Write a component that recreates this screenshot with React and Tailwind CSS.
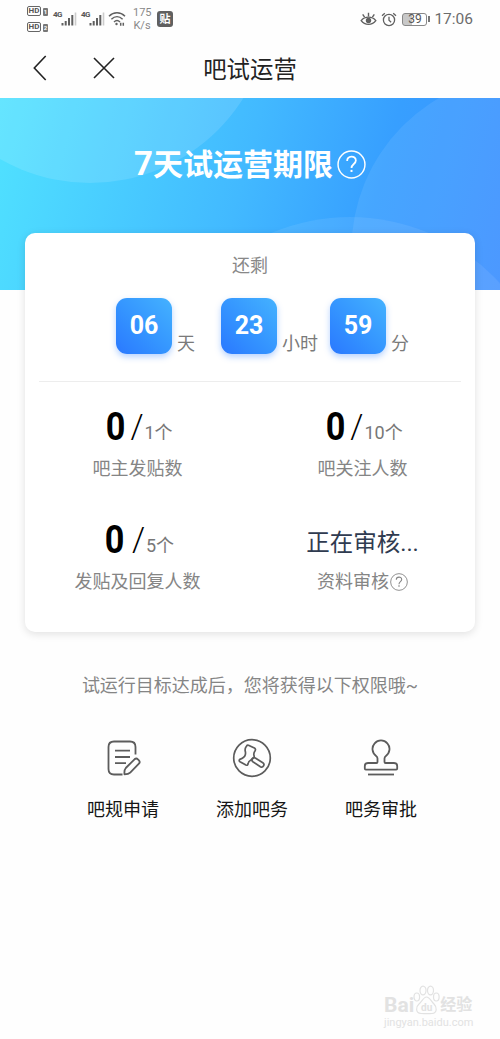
import React from 'react';

// Small "HD" badge with the SIM slot next to it
function HdBadge({ slot }) {
  return (
    <div className="flex items-end gap-[2px]">
      <span className="flex h-[10px] w-[14px] items-center justify-center rounded-[2px] border-[1.5px] border-[#666] text-[8px] leading-none font-bold text-[#555]">HD</span>
      <span className="flex h-[8px] w-[5px] items-center justify-center rounded-[1px] bg-[#777] text-[6px] leading-none font-bold text-white">{slot}</span>
    </div>
  );
}

function Signal() {
  return (
    <div className="flex h-[20px] w-[24px] items-start">
      <span className="-mr-[1px] w-[9px] shrink-0 text-[8px] leading-[11px] font-bold tracking-[-0.5px] text-[#555]">4G</span>
      <svg width="16" height="15" viewBox="0 0 16 15" className="mt-[3px] shrink-0">
        <path d="M1.5 11v2.5M4.7 9v4.5M8 6v7.5M11.3 3v10.5" stroke="#606060" strokeWidth="2" />
        <path d="M14.5 .5v13" stroke="#ccc" strokeWidth="1.6" />
      </svg>
    </div>
  );
}

function StatusBar() {
  return (
    <div className="flex h-[38px] items-center justify-between pr-[27px] pl-[27px] text-[#666]">
      <div className="flex items-center">
        <div className="flex w-[26px] flex-col gap-[6px]">
          <HdBadge slot="1" />
          <HdBadge slot="2" />
        </div>
        <div className="flex gap-[4px]">
          <Signal />
          <Signal />
        </div>
        <svg width="18" height="16" viewBox="0 0 18 16" fill="none" stroke="#606060" strokeWidth="1.5" className="ml-[3px]">
          <path d="M1 5.2C5.6.6 12.4.6 17 5.2M3.4 8.2c3.4-3.2 7.8-3.2 11.2 0M6 11c1.8-1.7 4.2-1.7 6 0" />
          <circle cx="8.5" cy="13" r="1.2" fill="#606060" stroke="none" />
          <path d="M12.7 11.8v3M15.3 11.8v3" />
        </svg>
        <div className="mt-[1px] ml-[7px] w-[18px] text-center text-[11px] leading-[12.5px] text-[#888]">
          <div>175</div>
          <div>K/s</div>
        </div>
        <div className="ml-[6px] flex h-[16px] w-[16px] items-center justify-center rounded-[3px] bg-[#606060] text-[11px] leading-none font-bold text-white">贴</div>
      </div>
      <div className="flex items-center">
        <svg width="17" height="14" viewBox="0 0 17 14" fill="none" stroke="#606060" strokeWidth="1.4">
          <path d="M1.2 8.6C4.8 4 12.2 4 15.8 8.6 12.2 13.6 4.8 13.6 1.2 8.6z" />
          <circle cx="8.5" cy="8.5" r="2.7" fill="#606060" stroke="none" />
          <path d="M8.5 4.6V.8M4.6 5.2 2.7 2.4M12.4 5.2l1.9-2.8" />
        </svg>
        <svg width="16" height="15" viewBox="0 0 16 15" fill="none" stroke="#606060" strokeWidth="1.3" className="ml-[4px]">
          <circle cx="8" cy="8" r="5.6" />
          <path d="M8 4.8v3.4l2.1 2M1 3.8 3.8 1.3M15 3.8l-2.8-2.5" />
        </svg>
        <div className="ml-[5px] flex h-[13px] w-[25px] items-center justify-center rounded-[3px] border border-[#888] bg-linear-to-r from-[#c8c8c8] from-39% to-white to-39% text-[12px] leading-none text-[#555]">39</div>
        <div className="ml-[1px] h-[6px] w-[2px] bg-[#777]" />
        <span className="mt-[2px] ml-[4px] text-[15.5px] leading-none text-[#6c6c6c]">17:06</span>
      </div>
    </div>
  );
}

function Header() {
  return (
    <div className="grid h-[60px] grid-cols-[125px_1fr_125px] items-center">
      <div className="flex items-center pl-[33px]">
        <svg width="14" height="26" viewBox="0 0 14 26" fill="none" stroke="#222" strokeWidth="1.6">
          <path d="M12.7 1 1.3 13l11.4 12" />
        </svg>
        <svg width="22" height="22" viewBox="0 0 22 22" fill="none" stroke="#222" strokeWidth="1.6" className="ml-[46px]">
          <path d="M1 1l20 20M21 1 1 21" />
        </svg>
      </div>
      <h1 className="pt-[4px] text-center text-[23.4px] leading-[30px] text-[#222]">吧试运营</h1>
    </div>
  );
}

function Help({ className }) {
  return (
    <svg viewBox="0 0 28 28" fill="none" stroke="currentColor" strokeWidth="1.4" className={className}>
      <circle cx="14" cy="14" r="13" />
      <path d="M9.8 10.6c0-5.6 8.4-5.6 8.4-.4 0 3.3-4.2 3.4-4.2 7.2" strokeWidth="1.7" />
      <path d="M14 19.2v2" strokeWidth="1.9" />
    </svg>
  );
}

function Banner() {
  return (
    <div className="relative h-[192px] bg-[linear-gradient(105deg,#50e2ff_0%,#42b9ff_48%,#379fff_73%,#3d90ff_100%)]">
      <svg className="absolute inset-0" width="500" height="192" viewBox="0 0 500 192" fill="#fff">
        <circle cx="90" cy="-96" r="181" fillOpacity=".12" />
        <circle cx="527" cy="152" r="175.6" fillOpacity=".08" />
        <circle cx="350" cy="322" r="203" fillOpacity=".08" />
      </svg>
      <div className="relative flex items-center justify-center pt-[44px] text-white">
        <span className="pt-[1px] text-[30px] leading-[42px] font-bold">
          <span className="text-[33px]">7</span>天试运营期限
        </span>
        <Help className="ml-[4px] h-[29px] w-[29px]" />
      </div>
    </div>
  );
}

function TimeBox({ value, unit, className }) {
  return (
    <div className={`flex items-end ${className}`}>
      <div className="flex h-[56px] w-[56px] items-center justify-center rounded-[11px] bg-linear-to-tr from-[#2b78ff] to-[#45b2ff] text-[25px] font-bold text-white shadow-[0_3px_6px_rgba(50,130,255,0.35)]">
        {value}
      </div>
      <span className="-mb-[2px] ml-[5px] text-[18px] leading-[24px] text-[#7a7a7a]">{unit}</span>
    </div>
  );
}

function Goal({ total, label, gap }) {
  return (
    <div className="flex flex-col items-center">
      <div className="flex h-[44px] items-baseline pl-[4px] text-[#777]">
        <span className="flex w-[19px] scale-x-90 justify-center text-[38px] leading-[44px] font-bold text-black">0</span>
        <span className={`-translate-y-[2px] text-[33px] leading-none font-light text-black ${gap}`}>/</span>
        <span className="ml-[1px] -translate-y-px text-[18px]">{total}</span>
      </div>
      <div className="mt-[7px] text-[18px] leading-[26px] text-[#858585]">{label}</div>
    </div>
  );
}

function Card() {
  return (
    <div className="relative mx-[25px] -mt-[57px] h-[399px] rounded-[10px] bg-white px-[14px] shadow-[0_2px_8px_rgba(0,0,0,0.12)]">
      <div className="pt-[21px] text-center text-[18px] leading-[24px] text-[#888]">还剩</div>
      <div className="mt-[20px] flex pl-[77px]">
        <TimeBox value="06" unit="天" className="w-[105px]" />
        <TimeBox value="23" unit="小时" className="w-[109px]" />
        <TimeBox value="59" unit="分" className="" />
      </div>
      <div className="mt-[27px] h-px bg-[#ededed]" />
      <div className="-ml-[14px] grid w-[450px] grid-cols-2 gap-y-[36px] pt-[23px]">
        <Goal total="1个" label="吧主发贴数" gap="ml-[5px]" />
        <Goal total="10个" label="吧关注人数" gap="ml-[5px]" />
        <Goal total="5个" label="发贴及回复人数" gap="ml-[8px]" />
        <div className="flex flex-col items-center">
          <div className="h-[44px] text-[23.5px] leading-[50px] text-[#2f3b50]">正在审核...</div>
          <div className="mt-[7px] flex items-center text-[18px] leading-[26px] text-[#858585]">
            资料审核
            <Help className="ml-[1px] h-[18px] w-[18px]" />
          </div>
        </div>
      </div>
    </div>
  );
}

function RuleIcon() {
  return (
    <svg width="40" height="40" viewBox="0 0 40 40" fill="none" stroke="#5c5c5c" strokeWidth="1.8" strokeLinejoin="round">
      <path d="M19.5 36.5H11q-5.5 0-5.5-5.5V9q0-5.5 5.5-5.5H27q5.5 0 5.5 5.500v7.5" />
      <path d="M12 12.7h15M12 19h15M12 25.2h11" />
      <path d="M22.8 30 31.5 21.3q1.8-1.5 3.4 0l1 1q1.6 1.7 0 3.4L27.2 34.6q-1.7 1.7-5.7 1.7-.5-4.3 1.3-6.3z" />
    </svg>
  );
}

function GavelIcon() {
  return (
    <svg width="40" height="40" viewBox="0 0 40 40" fill="none" stroke="#5c5c5c" strokeWidth="1.7" strokeLinejoin="round">
      <circle cx="20" cy="20" r="18.3" />
      <path d="M14.4 8.3q1-1.6 2.6-.8l5.4 2.6q1.7 1 .7 2.6-1.9 2.6-1 5 .4 1.5-.8 2.5l-2.4 1.7q-2.6 1.3-2.9 4.1-.4 1.8-2.1 1L8 23.700q-1.5-1-.2-2.3 4.7-1.6 5.5-4.7.5-2-.1-3.6-.5-2.5 1.2-4.8z" />
      <path d="M20.3 20.5q1.2-1.5 3-.5l7.5 4.7q1.9 1.3.8 3.100-1.2 2-3.2.9l-7.6-5q-1.7-1.5-.5-3.2z" />
    </svg>
  );
}

function StampIcon() {
  return (
    <svg width="40" height="40" viewBox="0 0 40 40" fill="none" stroke="#5c5c5c" strokeWidth="1.8" strokeLinejoin="round">
      <path d="M16.5 24v-3.5q0-1.6-1.4-2.6a8.5 8.5 0 1 1 9.800 0q-1.4 1-1.4 2.6V24q0 1 1 1H33q3.2 0 3.2 3v2.6q0 1-1 1H4.8q-1 0-1-1V28q0-3 3.2-3h8.5q1 0 1-1z" />
      <path d="M7 36.5h26" />
    </svg>
  );
}

const rights = [
  { icon: RuleIcon, label: '吧规申请' },
  { icon: GavelIcon, label: '添加吧务' },
  { icon: StampIcon, label: '吧务审批' },
];

function Watermark() {
  return (
    <div className="mt-auto mr-[24px] mb-[10px] ml-auto w-[92px] text-[#e2e2e2]">
      <div className="flex h-[32px] items-end">
        <span className="text-[21px] leading-[22px] font-bold">Bai</span>
        <svg width="27" height="31" viewBox="0 0 27 31" className="-ml-[1px] shrink-0" fill="none" stroke="currentColor" strokeWidth="1.2">
          <ellipse cx="3.8" cy="12" rx="2.8" ry="4" />
          <ellipse cx="10" cy="5.5" rx="3" ry="4.3" />
          <ellipse cx="17.5" cy="5.5" rx="3" ry="4.3" />
          <ellipse cx="23.3" cy="12" rx="2.8" ry="4" />
          <path d="M13.5 12c3 0 4.5 4 7.5 7s3.5 9-2 9.5c-2 .2-8 .2-11 0-6-.5-5-7-2-9.5s4.5-7 7.5-7z" />
          <text x="8" y="26" fontSize="10" fontWeight="700" fill="currentColor" stroke="none">du</text>
        </svg>
        <span className="text-[16px] leading-[22px] font-bold whitespace-nowrap">经验</span>
      </div>
      <div className="text-[11px] leading-[13px] whitespace-nowrap">jingyan.baidu.com</div>
    </div>
  );
}

export default function App() {
  return (
    <div className="flex h-[1039px] w-[500px] flex-col overflow-hidden bg-[#fefefe] font-[Roboto,'Noto_Sans_CJK_SC',sans-serif]">
      <StatusBar />
      <Header />
      <Banner />
      <Card />
      <p className="mt-[41px] text-center text-[18px] leading-[26px] text-[#858585]">试运行目标达成后，您将获得以下权限哦~</p>
      <div className="mx-auto mt-[39px] grid w-[391px] grid-cols-[129px_129px_129px] pl-[4px]">
        {rights.map(({ icon: Icon, label }) => (
          <div key={label} className="flex flex-col items-center">
            <Icon />
            <span className="mt-[19px] text-[18px] leading-[26px] text-[#151515]">{label}</span>
          </div>
        ))}
      </div>
      <Watermark />
    </div>
  );
}
